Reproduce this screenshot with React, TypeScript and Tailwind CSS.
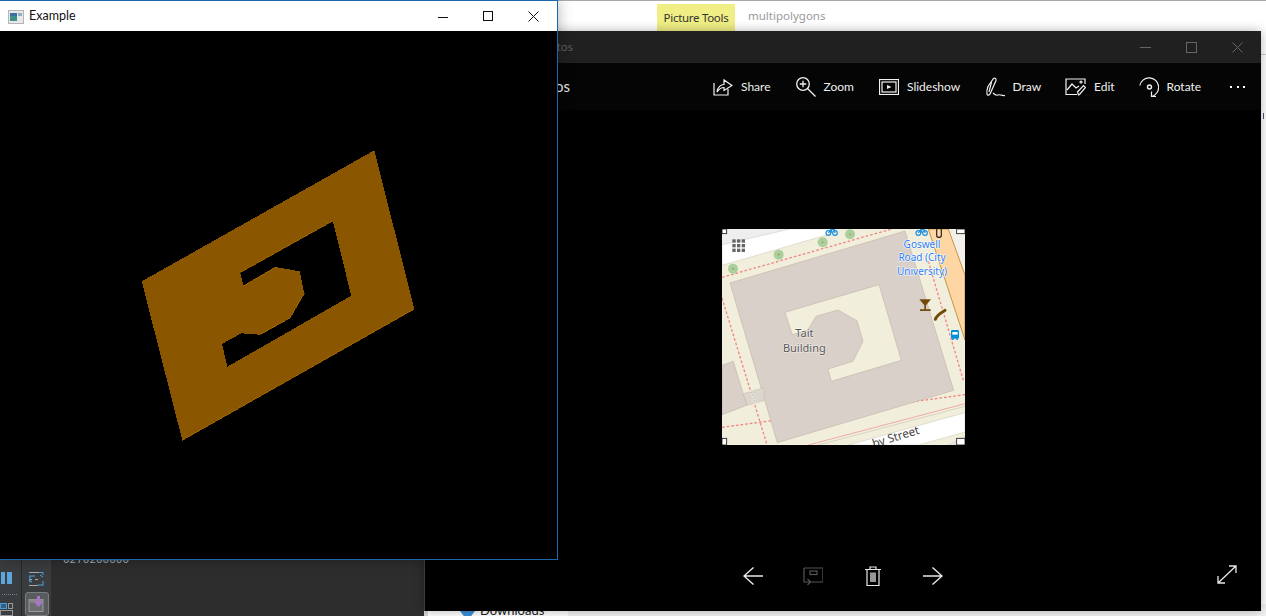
const ui = '"Noto Sans", "Open Sans", sans-serif';
const seg = 'Lato, "Noto Sans", sans-serif';

function ToolItem({ icon, label, w }: { icon: React.ReactNode; label: string; w: string }) {
  return (
    <div className="flex items-center gap-2">
      {icon}
      <span className={`text-[12px] leading-none text-[#f0f0f0] whitespace-nowrap ${w}`} style={{ fontFamily: seg }}>{label}</span>
    </div>
  );
}

function MapImage() {
  const red = { stroke: '#f08686', strokeWidth: 4, strokeDasharray: '8 6', fill: 'none' };
  return (
    <svg width="243" height="216" viewBox="21 21 729 648" className="block">
      <rect x="21" y="21" width="729" height="648" fill="#f1efdb" />
      <polygon points="21,21 230,21 21,70" fill="#eeeeee" />
      <polygon points="21,68 225,21 345,21 345,36 21,130" fill="#ffffff" stroke="#c9c6b8" strokeWidth="1.5" />
      <polygon points="700,21 750,21 750,159" fill="#f3f0ea" />
      <polygon points="640,21 700,21 750,159 750,354" fill="#fdd6a4" stroke="#b8872e" strokeWidth="2.5" />
      <line x1="21" y1="166" x2="530" y2="21" {...red} />
      <line x1="640" y1="118" x2="745" y2="475" {...red} />
      <line x1="21" y1="228" x2="155" y2="665" {...red} />
      <line x1="21" y1="616" x2="750" y2="518" {...red} />
      <polygon points="45,183 570,27 716,505 187,662" fill="#d9d0c9" stroke="#c4b6ab" strokeWidth="2" />
      <polygon
        points="232,338 278,325 303,283 369,264 426,296 444,358 414,418 339,441 349,478 559,415 492,188 210,271"
        fill="#f1efdb"
        stroke="#c4b6ab"
        strokeWidth="2"
      />
      <polygon points="21,430 55,418 95,550 21,578" fill="#d9d0c9" stroke="#c4b6ab" strokeWidth="2" />
      <polygon points="85,515 147,497 148,535 97,550" fill="#dcd6cc" stroke="#c4b6ab" strokeWidth="1.5" />
      <line x1="108" y1="505" x2="122" y2="545" stroke="#ffffff" strokeWidth="6" strokeDasharray="5 4" />
      <line x1="108" y1="505" x2="122" y2="545" stroke="#777777" strokeWidth="1" />
      <line x1="280" y1="669" x2="750" y2="545" stroke="#ee9a9a" strokeWidth="2.5" />
      <line x1="310" y1="669" x2="750" y2="553" stroke="#c9c6b8" strokeWidth="2" />
      <polygon points="400,669 750,572 750,630 610,669" fill="#ffffff" stroke="#c9c6b8" strokeWidth="1.5" />
      <polygon points="695,669 750,640 750,669" fill="#e6e1d8" />
      <text x="0" y="0" transform="translate(476 677) rotate(-17)" fontFamily={ui} fontSize="35" fill="#444444">by Street</text>
      {[[54, 140], [191, 98], [323, 61], [405, 37]].map(([x, y]) => (
        <g key={x}>
          <circle cx={x} cy={y} r="15" fill="#a9cf9c" />
          <circle cx={x} cy={y} r="2.5" fill="#b08a55" />
        </g>
      ))}
      {[52, 66, 80].map((x) =>
        [52, 66, 80].map((y) => <rect key={`${x}-${y}`} x={x} y={y} width="10" height="10" fill="#666666" />),
      )}
      {[350, 620].map((x) => (
        <g key={x} stroke="#1c8fe0" strokeWidth="3.5" fill="none">
          <circle cx={x - 10} cy="33" r="7" />
          <circle cx={x + 10} cy="33" r="7" />
          <path d={`M${x - 10} 33 L${x - 2} 22 H${x + 8} L${x + 10} 33 M${x - 2} 22 L${x + 1} 33`} />
        </g>
      ))}
      <rect x="665" y="18" width="14" height="28" rx="6" fill="none" stroke="#222222" strokeWidth="3.5" />
      <path d="M613 232 H648 L633 250 V262 H647 V267 H615 V262 H628 V250 Z" fill="#734a08" />
      <path d="M661 292 C664 280 678 272 690 265" fill="none" stroke="#734a08" strokeWidth="9" strokeLinecap="round" />
      <rect x="708" y="324" width="24" height="26" rx="4" fill="#0092da" />
      <rect x="712" y="330" width="16" height="8" fill="#ffffff" />
      <rect x="711" y="350" width="5" height="4" fill="#0092da" />
      <rect x="724" y="350" width="5" height="4" fill="#0092da" />
      <g fontFamily={ui} fontSize="30" textAnchor="middle" fill="#2e7df5" stroke="#ffffff" strokeWidth="3" paintOrder="stroke">
        <text x="621" y="77">Goswell</text>
        <text x="621" y="118">Road (City</text>
        <text x="621" y="159">University)</text>
      </g>
      <g fontFamily={ui} fontSize="33" textAnchor="middle" fill="#555555" stroke="#ffffff" strokeOpacity="0.7" strokeWidth="3" paintOrder="stroke">
        <text x="268" y="344">Tait</text>
        <text x="268" y="390">Building</text>
      </g>
      {[[21, 21, 14, 14], [725, 21, 25, 14], [21, 649, 14, 20], [725, 649, 25, 20]].map(([x, y, w, h]) => (
        <rect key={`${x}${y}`} x={x} y={y} width={w} height={h} fill="#ffffff" stroke="#1a1a1a" strokeWidth="2.5" />
      ))}
    </svg>
  );
}

function BrownShape() {
  return (
    <svg width="557" height="528" viewBox="0 31 557 528" className="block">
      <path
        fillRule="evenodd"
        fill="#8b5600"
        shapeRendering="crispEdges"
        d="M374.3 150.3 L414.3 309 L182.3 440.3 L141.7 281.3 Z M332.7 221 L351.3 295.7 L227.3 366.7 L222 344 L241.3 333.3 L260 334.7 L290 318 L304.3 293.3 L299.7 271.3 L275.7 267 L243.7 285.7 L240 272.7 Z"
      />
      <g stroke="#c47c00" strokeWidth="0.6" fill="none" shapeRendering="crispEdges">
        <path d="M414.3 309 L182.3 440.3 M332.7 221 L240 272.7 M304.3 293.3 L290 318 M275.7 267 L243.7 285.7 M260 334.7 L290 318" />
      </g>
    </svg>
  );
}

export default function App() {
  return (
    <div className="relative w-[1266px] h-[616px] overflow-hidden bg-white" style={{ fontFamily: ui }}>
      {/* Explorer window behind */}
      <div className="absolute left-[424px] right-0 top-0 bottom-0 flex flex-col bg-white border-l-4 border-l-[#d4d4d4]">
        <div className="h-[31px] flex items-start border-t border-[#aaaaaa] pl-[229px]">
          <div className="mt-[3px] h-[27px] w-[78px] bg-[#f0ee84] flex items-center justify-center text-[11.5px] tracking-[-0.3px] text-[#333333] whitespace-nowrap">
            Picture Tools
          </div>
          <div className="ml-[13px] mt-[7px] text-[11.5px] leading-4 text-[#999999] whitespace-nowrap">multipolygons</div>
        </div>
        <div className="h-[24px] border-b border-[#cccccc]" />
        <div className="flex-1 flex justify-end">
          <div className="mt-[58px] mr-[2px] w-[1px] h-[6px] bg-[#5a4a80]" />
        </div>
        <div className="h-[12px] flex">
          <div className="w-[140px] flex items-start pl-[32px] gap-[5px] overflow-hidden">
            <svg width="15" height="12" viewBox="0 0 15 12" className="mt-[7px] shrink-0">
              <path d="M0 0 H15 L7.5 10 Z" fill="#3a8fd6" />
            </svg>
            <span className="-mt-[2px] text-[13px] leading-4 text-[#222222] whitespace-nowrap" style={{ fontFamily: seg }}>Downloads</span>
          </div>
          <div className="flex-1 bg-[#f2f2f2]" />
        </div>
      </div>

      {/* IDE window behind */}
      <div className="absolute left-0 top-[540px] bottom-0 w-[424px] flex bg-[#2d2d2d]">
        <div className="w-[21px] bg-[#3a3d3f] flex flex-col pt-[32px] overflow-hidden">
          <div className="flex gap-[2px] pl-[1px]">
            <div className="w-[4px] h-[12px] bg-[#5da6dc]" />
            <div className="w-[5px] h-[12px] bg-[#5da6dc]" />
          </div>
          <div className="mt-[10px] ml-[2px] w-[15px] border-t border-dotted border-[#7c7f81]" />
          <div className="mt-[8px] flex gap-[1px]">
            <div className="w-[7px] h-[6px] border border-[#4d9ad4] bg-[#2f5f85]" />
            <div className="w-[5px] h-[6px] border border-[#999999]" />
          </div>
          <div className="mt-[1px] w-[13px] h-[6px] border border-[#999999]" />
        </div>
        <div className="w-[30px] border-l border-[#26282a] bg-[#3a3d3f] flex flex-col items-center pt-[31px]">
          <svg width="15" height="16" viewBox="0 0 15 16" fill="none" strokeWidth="1">
            <path d="M0 1.5 H10 M0 8.5 H3 M6 8.5 H9 M0 14.5 H9" stroke="#a8a8a8" />
            <path d="M10 1.5 H14 V4 M11 4 L14 6 M14 14.5 V10 M9 14 H14 M0 5 H6 M1 5 V11 M0 10 L3 11" stroke="#4da2de" />
          </svg>
          <div className="mt-[5px] w-[24px] h-[24px] rounded-[3px] border border-[#7a7d7f] bg-[#585b5d] flex items-center justify-center">
            <svg width="17" height="17" viewBox="0 0 17 17" fill="none">
              <rect x="1" y="3.5" width="14" height="12" fill="#6c6e70" stroke="#9a9a9a" />
              <rect x="1" y="3.5" width="14" height="3" fill="#8a8a8a" />
              <path d="M9 0 H12 V6 H15 L10.5 11 L6 6 H9 Z" fill="#a874cc" />
            </svg>
          </div>
        </div>
        <div className="pl-[12px] pt-[12px] text-[11px] leading-4 text-[#9fb4c4] whitespace-nowrap" style={{ fontFamily: '"Liberation Mono", monospace' }}>
          0270200000
        </div>
      </div>

      {/* Photos window */}
      <div className="absolute left-[424px] top-[31px] w-[837px] h-[580px] flex flex-col bg-black border-l border-[#3c3c3c] shadow-[0_0_10px_rgba(0,0,0,0.3)]">
        <div className="h-[32px] shrink-0 bg-[#202020] flex items-center">
          <span className="ml-[111px] text-[12px] text-[#5e5e5e]" style={{ fontFamily: seg }}>Photos</span>
          <div className="ml-auto flex items-center gap-[35px] pr-[18px]">
            <svg width="11" height="11" viewBox="0 0 11 11" fill="none" stroke="#666666">
              <path d="M0 5.5 H11" />
            </svg>
            <svg width="11" height="11" viewBox="0 0 11 11" fill="none" stroke="#666666">
              <rect x="0.5" y="0.5" width="10" height="10" />
            </svg>
            <svg width="11" height="11" viewBox="0 0 11 11" fill="none" stroke="#666666">
              <path d="M0.5 0.5 L10.5 10.5 M10.5 0.5 L0.5 10.5" />
            </svg>
          </div>
        </div>
        <div className="h-[47px] shrink-0 bg-[#050505] flex items-center pr-[16px]">
          <span className="ml-[99px] text-[15px] text-[#e8e8e8]" style={{ fontFamily: seg }}>Photos</span>
          <div className="ml-auto flex items-center gap-[24.5px] pt-[1px]">
            <ToolItem
              w="w-[30px]"
              label="Share"
              icon={
                <svg width="20" height="18" viewBox="0 0 20 18" fill="none" stroke="#f2f2f2" strokeWidth="1.2">
                  <path d="M1 5 V17 H15 V11" />
                  <path d="M4 14 C4.5 9 8 6.5 11 6.5 V2 L19 7.5 L11 12.5 V9.5 C8 9.5 6 11 4 14 Z" />
                </svg>
              }
            />
            <ToolItem
              w="w-[31px]"
              label="Zoom"
              icon={
                <svg width="20" height="20" viewBox="0 0 20 20" fill="none" stroke="#f2f2f2" strokeWidth="1.3">
                  <circle cx="7" cy="7" r="6.3" />
                  <path d="M11.5 11.5 L19.5 19.5 M7 3.8 V10.2 M3.8 7 H10.2" />
                </svg>
              }
            />
            <ToolItem
              w="w-[53px]"
              label="Slideshow"
              icon={
                <svg width="20" height="16" viewBox="0 0 20 16" fill="none" stroke="#f2f2f2" strokeWidth="1.2">
                  <rect x="0.5" y="0.5" width="19" height="15" />
                  <rect x="3" y="3" width="14" height="10" />
                  <path d="M8 6 L12.5 8 L8 10 Z" fill="#f2f2f2" stroke="none" />
                </svg>
              }
            />
            <ToolItem
              w="w-[28px]"
              label="Draw"
              icon={
                <svg width="20" height="20" viewBox="0 0 20 20" fill="none" stroke="#f2f2f2" strokeWidth="1.2">
                  <path d="M8.5 1.5 C10 0.5 11.5 1.5 11 3.5 L5.5 16 C4.5 18.5 2.3 19 2 17 C1.5 14.5 2 12 3 9.5 Z" />
                  <path d="M6.5 5 L4 15" />
                  <path d="M8 16 C10 18 11 19 13 18 C15 17 16 19 20 18.5" />
                </svg>
              }
            />
            <ToolItem
              w="w-[20px]"
              label="Edit"
              icon={
                <svg width="21" height="18" viewBox="0 0 21 18" fill="none" stroke="#f2f2f2" strokeWidth="1.2">
                  <path d="M20 6 V1 H1 V16.5 H12" />
                  <path d="M2 12 L7 6 L11 10 L14 8" />
                  <circle cx="16" cy="4" r="1" />
                  <path d="M13.5 17 L12.5 14 L18.5 7.5 L20.5 9.5 L14.5 16.5 Z" />
                </svg>
              }
            />
            <ToolItem
              w="w-[34px]"
              label="Rotate"
              icon={
                <svg width="20" height="21" viewBox="0 0 20 21" fill="none" stroke="#f2f2f2" strokeWidth="1.2">
                  <path d="M0.8 8.5 A9.5 9.5 0 1 1 12.5 19.5" />
                  <path d="M12.5 14.5 V19.5 L17 19.5" />
                  <circle cx="10.5" cy="10" r="2" strokeWidth="1.4" />
                </svg>
              }
            />
            <div className="ml-[5px] flex gap-[4.5px] w-[15px]">
              <div className="w-[2px] h-[2px] shrink-0 bg-white" />
              <div className="w-[2px] h-[2px] shrink-0 bg-white" />
              <div className="w-[2px] h-[2px] shrink-0 bg-white" />
            </div>
          </div>
        </div>
        <div className="h-[454px] shrink-0 flex items-center justify-center pl-[1px]">
          <MapImage />
        </div>
        <div className="flex-1 grid grid-cols-[1fr_auto_1fr] items-start pt-[1px]">
          <div />
          <div className="flex items-center gap-10 h-[22px]">
            <svg width="20" height="18" viewBox="0 0 20 18" fill="none" stroke="#e8e8e8" strokeWidth="1.4">
              <path d="M20 9 H1 M10.5 0.5 L1 9 L10.5 17.5" />
            </svg>
            <svg width="20" height="18" viewBox="0 0 20 18" fill="none" stroke="#555555" strokeWidth="1.2">
              <path d="M1 1 H20 V15 H6 M1 1 V15 H7 M4.5 12 L7.5 15 L4.5 18" />
              <rect x="7" y="4" width="7" height="3.5" />
            </svg>
            <svg width="20" height="20" viewBox="0 0 20 20" fill="none" stroke="#e8e8e8" strokeWidth="1.2">
              <path d="M2 3.5 H18 M7 3 V1 H13 V3 M4 4 V19.5 H16 V4" />
              <path d="M8 6.5 V16 M10 6.5 V16 M12 6.5 V16" strokeWidth="1.3" />
            </svg>
            <svg width="20" height="18" viewBox="0 0 20 18" fill="none" stroke="#e8e8e8" strokeWidth="1.4">
              <path d="M0 9 H19 M9.5 0.5 L19 9 L9.5 17.5" />
            </svg>
          </div>
          <div className="flex justify-end pr-[24px]">
            <svg width="20" height="19" viewBox="0 0 20 19" fill="none" stroke="#e8e8e8" strokeWidth="1.3">
              <path d="M1 18 L19 1 M12 1 H19 V8 M1 11 V18 H8" />
            </svg>
          </div>
        </div>
      </div>

      {/* Example window */}
      <div className="absolute left-0 top-0 w-[558px] h-[560px] flex flex-col bg-black border-t border-r border-b border-[#1c66ad] shadow-[0_0_14px_rgba(0,0,0,0.3)]">
        <div className="h-[30px] shrink-0 bg-white flex items-center">
          <svg width="16" height="14" viewBox="0 0 16 14" className="ml-[8px] mt-[1px]">
            <rect x="0.5" y="0.5" width="15" height="13" fill="#e8e8e8" stroke="#b5b5b5" />
            <rect x="2" y="3" width="7" height="8" fill="#3f8f8a" />
            <rect x="2" y="3" width="7" height="3" fill="#3e6da0" />
            <rect x="10" y="3" width="4" height="3" fill="#8fb0c0" />
          </svg>
          <span className="ml-[5px] text-[12.5px] leading-none text-[#111111]" style={{ fontFamily: seg }}>Example</span>
          <div className="ml-auto flex items-center gap-[35px] pr-[18px]">
            <svg width="10" height="10" viewBox="0 0 10 10" fill="none" stroke="#111111" className="mt-[1px]">
              <path d="M0 5.5 H10" />
            </svg>
            <svg width="10" height="10" viewBox="0 0 10 10" fill="none" stroke="#111111">
              <rect x="0.5" y="0.5" width="9" height="9" />
            </svg>
            <svg width="11" height="11" viewBox="0 0 11 11" fill="none" stroke="#111111">
              <path d="M0.5 0.5 L10.5 10.5 M10.5 0.5 L0.5 10.5" />
            </svg>
          </div>
        </div>
        <BrownShape />
      </div>
    </div>
  );
}
